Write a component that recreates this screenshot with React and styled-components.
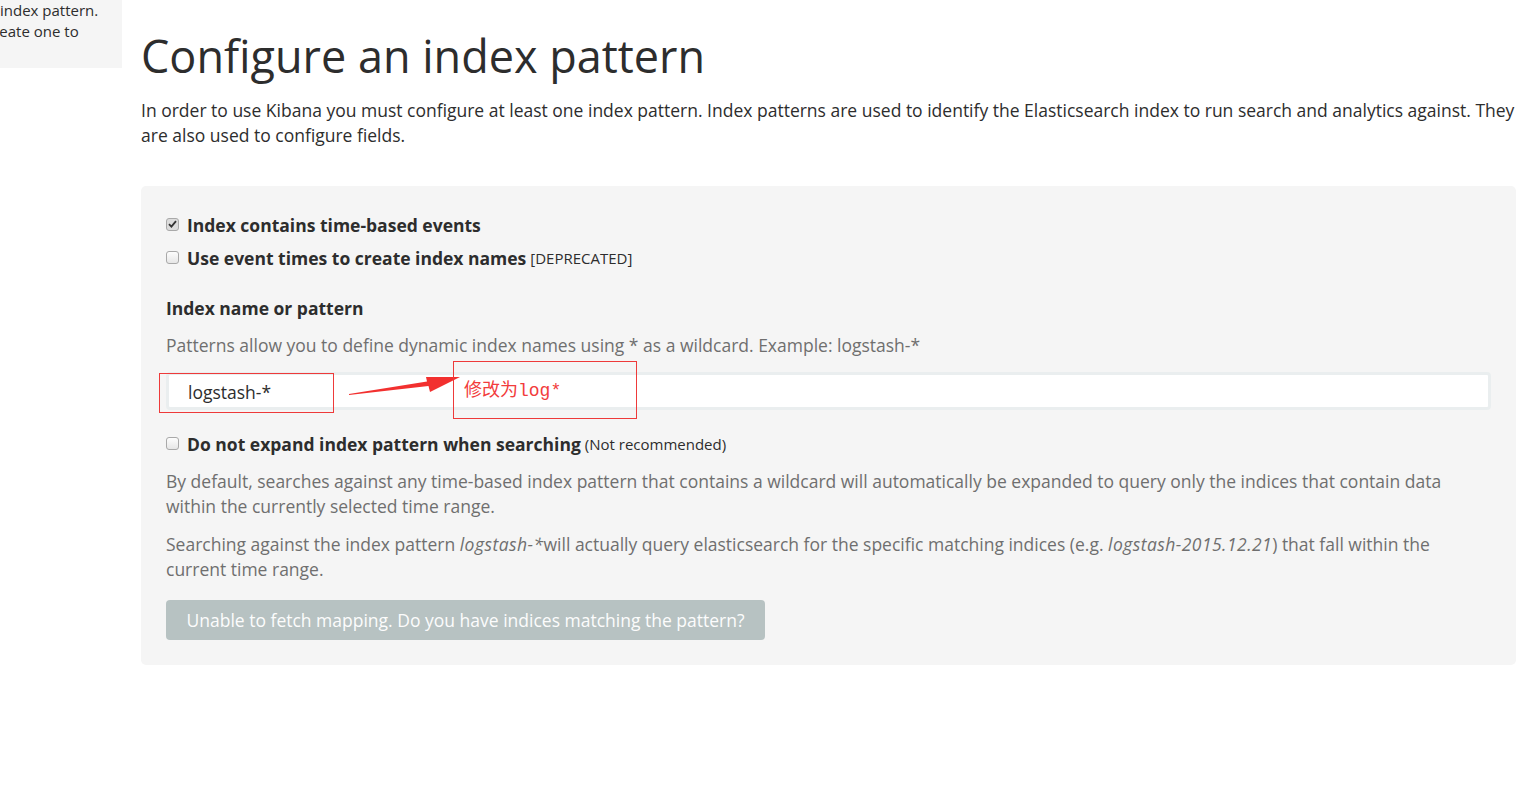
import React from 'react';
import styled, { createGlobalStyle } from 'styled-components';

const GlobalStyle = createGlobalStyle`
  html, body {
    margin: 0;
    padding: 0;
    background: #fff;
  }
  body {
    font-family: 'Open Sans', 'Noto Sans', sans-serif;
    font-size: 17.5px;
    line-height: 25px;
    color: #2d2d2d;
  }
`;

const Page = styled.div`
  display: flex;
  align-items: flex-start;
  width: 1521px;
  height: 785px;
  overflow: hidden;
`;

const Sidebar = styled.div`
  flex: 0 0 122px;
  height: 68px;
  background: #f5f5f5;
  overflow: hidden;
`;

const SidebarLine = styled.div`
  font-size: 15px;
  line-height: 21px;
  white-space: nowrap;
  color: #2d2d2d;
  margin-left: ${(p) => p.shift || 0}px;
`;

const Main = styled.div`
  flex: 0 0 1375px;
  margin-left: 19px;
`;

const Title = styled.h1`
  margin: 31px 0 17px;
  font-size: 45px;
  line-height: 49.5px;
  font-weight: 400;
  color: #2d2d2d;
`;

const Intro = styled.p`
  margin: 0 0 38.5px;
`;

const Panel = styled.div`
  background: #f5f5f5;
  border-radius: 5px;
  padding: 27px 25px 25px;
  display: flex;
  flex-direction: column;
`;

const CheckRow = styled.label`
  display: flex;
  align-items: center;
  margin-top: ${(p) => p.gap || 0}px;
`;

const Box = styled.span`
  flex: 0 0 13px;
  height: 13px;
  box-sizing: border-box;
  border: 1px solid #a9a9a9;
  border-radius: 3px;
  background: ${(p) => (p.checked ? '#dcdcdc' : 'linear-gradient(#fdfdfd, #e6e6e6)')};
  margin-right: 8px;
  margin-top: -3px;
  display: flex;
  align-items: center;
  justify-content: center;
`;

const Strong = styled.span`
  font-weight: 700;
`;

const Note = styled.span`
  font-size: 15px;
  margin-left: 4px;
`;

const Label = styled.div`
  font-weight: 700;
  margin-top: 25px;
`;

const Help = styled.p`
  margin: ${(p) => p.top || 0}px 0 0;
  color: #6f6f6f;

  i {
    letter-spacing: 0.45px;
  }
`;

const InputWrap = styled.div`
  position: relative;
  margin-top: 13.5px;
`;

const Input = styled.div`
  height: 38px;
  box-sizing: border-box;
  border: 3px solid #eaeeef;
  border-radius: 4px;
  background: #fff;
  padding: 3px 19px 0;
  display: flex;
  align-items: center;
  font-size: 17.5px;
  color: #2d2d2d;
`;

const Mark = styled.div`
  position: absolute;
  border: 1px solid #ee3a3a;
  box-sizing: border-box;
`;

const MarkText = styled.span`
  position: absolute;
  left: 10px;
  top: 18px;
  font-family: 'Liberation Mono', 'Noto Sans CJK SC', monospace;
  font-size: 18px;
  line-height: 22px;
  color: #f23c3c;
  white-space: nowrap;
`;

const Arrow = styled.svg`
  position: absolute;
  left: 182px;
  top: 1px;
`;

const Button = styled.button`
  align-self: flex-start;
  margin-top: 17.5px;
  height: 40px;
  width: 599px;
  border: none;
  border-radius: 4px;
  background: #b7c2c2;
  color: #fcfcfc;
  font-family: 'Open Sans', sans-serif;
  font-size: 17.5px;
  padding: 0;
`;

const Check = () => (
  <svg width="9" height="8" viewBox="0 0 9 8">
    <path d="M1 4.2 L3.4 6.6 L8 1.2" fill="none" stroke="#333" strokeWidth="1.8" />
  </svg>
);

const App = () => (
  <Page>
    <GlobalStyle />
    <Sidebar>
      <SidebarLine>index pattern.</SidebarLine>
      <SidebarLine shift={-14}>create one to</SidebarLine>
    </Sidebar>
    <Main>
      <Title>Configure an index pattern</Title>
      <Intro>
        In order to use Kibana you must configure at least one index pattern. Index patterns are used to
        identify the Elasticsearch index to run search and analytics against. They are also used to configure
        fields.
      </Intro>
      <Panel>
        <CheckRow>
          <Box checked><Check /></Box>
          <Strong>Index contains time-based events</Strong>
        </CheckRow>
        <CheckRow gap={8}>
          <Box />
          <Strong>Use event times to create index names</Strong>
          <Note>[DEPRECATED]</Note>
        </CheckRow>
        <Label>Index name or pattern</Label>
        <Help top={12}>Patterns allow you to define dynamic index names using * as a wildcard. Example: logstash-*</Help>
        <InputWrap>
          <Input>logstash-*</Input>
          <Mark style={{ left: -7, top: 1, width: 175, height: 40 }} />
          <Arrow width="120" height="24" viewBox="0 0 120 24">
            <polygon points="1,21 79,8.5 78,4 112,4 82,19 80.5,13 1,22" fill="#f2302f" />
          </Arrow>
          <Mark style={{ left: 287, top: -11, width: 184, height: 58 }}>
            <MarkText>修改为log*</MarkText>
          </Mark>
        </InputWrap>
        <CheckRow gap={22.5}>
          <Box />
          <Strong>Do not expand index pattern when searching</Strong>
          <Note>(Not recommended)</Note>
        </CheckRow>
        <Help top={12}>
          By default, searches against any time-based index pattern that contains a wildcard will automatically
          be expanded to query only the indices that contain data within the currently selected time range.
        </Help>
        <Help top={13}>
          Searching against the index pattern <i>logstash-*</i>will actually query elasticsearch for the
          specific matching indices (e.g. <i>logstash-2015.12.21</i>) that fall within the current time range.
        </Help>
        <Button>Unable to fetch mapping. Do you have indices matching the pattern?</Button>
      </Panel>
    </Main>
  </Page>
);

export default App;
